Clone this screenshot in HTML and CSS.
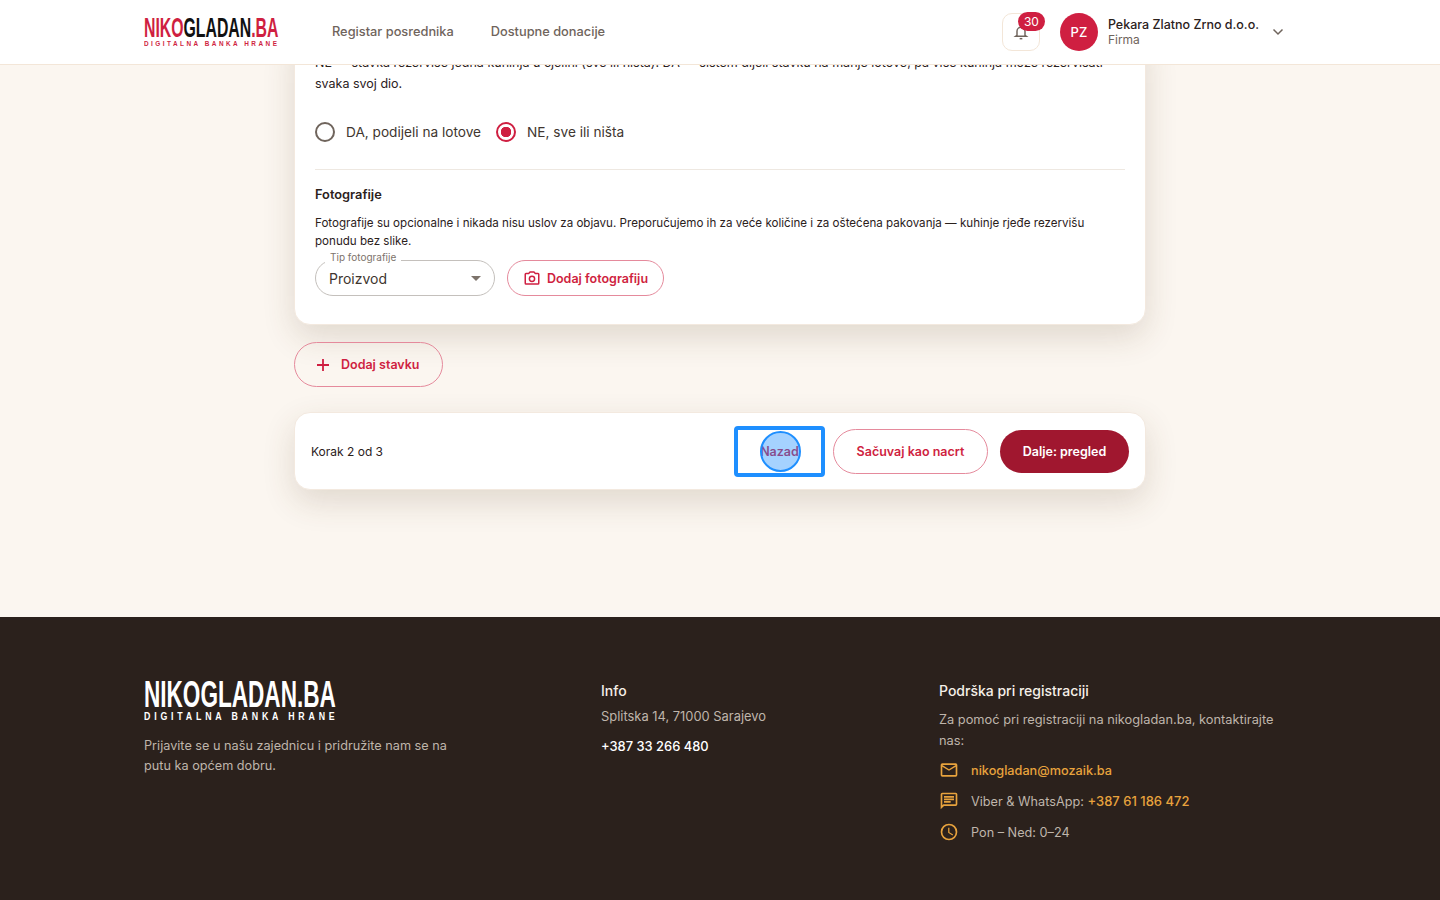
FILE: index.html
```html
<!DOCTYPE html>
<html>
    <head>
        <title>NikoGladan.ba</title>
        <link rel="stylesheet" href="styles.css">
    </head>
    <body>
        <header class="topbar">
            <a class="logo logo_small">
                <span class="logo_main"><b class="red">NIKO</b>GLADAN<b class="red">.BA</b></span>
                <span class="logo_tag">DIGITALNA BANKA HRANE</span>
            </a>
            <nav class="topnav">
                <a>Registar posrednika</a>
                <a>Dostupne donacije</a>
            </nav>
            <div class="topbar_right">
                <div class="bell">
                    <svg width="16" height="16" viewBox="0 0 24 24" fill="none" stroke="#6f645c" stroke-width="2.2"><path d="M6 17V11a6 6 0 0 1 12 0v6l2 1.5H4z"/><path d="M10 22h4"/></svg>
                    <span class="badge">30</span>
                </div>
                <div class="avatar">PZ</div>
                <div class="user">
                    <div class="user_name">Pekara Zlatno Zrno d.o.o.</div>
                    <div class="user_role">Firma</div>
                </div>
                <svg class="chevron" width="12" height="8" viewBox="0 0 12 8" fill="none" stroke="#6f645c" stroke-width="1.5"><path d="M1.5 1.5 6 6l4.5-4.5"/></svg>
            </div>
        </header>

        <main class="content">
            <section class="card card_form">
                <p class="hint">NE — stavka rezerviše jedna kuhinja u cjelini (sve ili ništa). DA — sistem dijeli stavku na manje lotove, pa više kuhinja može rezervisati svaka svoj dio.</p>
                <div class="radios">
                    <label class="radio"><span class="radio_dot"></span>DA, podijeli na lotove</label>
                    <label class="radio"><span class="radio_dot radio_on"></span>NE, sve ili ništa</label>
                </div>
                <hr class="divider">
                <h3 class="card_title">Fotografije</h3>
                <p class="photo_text">Fotografije su opcionalne i nikada nisu uslov za objavu. Preporučujemo ih za veće količine i za oštećena pakovanja — kuhinje rjeđe rezervišu ponudu bez slike.</p>
                <div class="photo_row">
                    <div class="select">
                        <span class="select_label">Tip fotografije</span>
                        <span>Proizvod</span>
                        <span class="select_arrow"></span>
                    </div>
                    <button class="btn btn_small">
                        <svg width="18" height="18" viewBox="0 0 24 24" fill="#cf1f41"><path d="M20 5h-3.2L15 3H9L7.2 5H4a2 2 0 0 0-2 2v12a2 2 0 0 0 2 2h16a2 2 0 0 0 2-2V7a2 2 0 0 0-2-2zm0 14H4V7h4l1.8-2h4.4L16 7h4zM12 8.5a4.5 4.5 0 1 0 0 9 4.5 4.5 0 0 0 0-9zm0 7a2.5 2.5 0 1 1 0-5 2.5 2.5 0 0 1 0 5z"/></svg>
                        Dodaj fotografiju
                    </button>
                </div>
            </section>

            <button class="btn btn_add">
                <svg width="18" height="18" viewBox="0 0 18 18" fill="none" stroke="#cf1f41" stroke-width="1.8"><path d="M9 3v12M3 9h12"/></svg>
                Dodaj stavku
            </button>

            <section class="card stepbar">
                <span class="step">Korak 2 od 3</span>
                <button class="btn_back">Nazad<span class="touch"></span></button>
                <button class="btn btn_draft">Sačuvaj kao nacrt</button>
                <button class="btn_next">Dalje: pregled</button>
            </section>
        </main>

        <footer class="footer">
            <div class="footer_col">
                <a class="logo logo_big">
                    <span class="logo_main">NIKOGLADAN.BA</span>
                    <span class="logo_tag">DIGITALNA BANKA HRANE</span>
                </a>
                <p class="footer_about">Prijavite se u našu zajednicu i pridružite nam se na putu ka općem dobru.</p>
            </div>
            <div class="footer_col">
                <h4>Info</h4>
                <p class="address">Splitska 14, 71000 Sarajevo</p>
                <p class="phone">+387 33 266 480</p>
            </div>
            <div class="footer_col">
                <h4>Podrška pri registraciji</h4>
                <p class="support">Za pomoć pri registraciji na nikogladan.ba, kontaktirajte nas:</p>
                <div class="contact contact_first">
                    <svg width="20" height="20" viewBox="0 0 24 24" fill="#e8a33d"><path d="M20 4H4a2 2 0 0 0-2 2v12a2 2 0 0 0 2 2h16a2 2 0 0 0 2-2V6a2 2 0 0 0-2-2zm0 14H4V8l8 5 8-5zm-8-7L4 6h16z"/></svg>
                    <a class="gold">nikogladan@mozaik.ba</a>
                </div>
                <div class="contact">
                    <svg width="20" height="20" viewBox="0 0 24 24" fill="#e8a33d"><path d="M20 2H4a2 2 0 0 0-2 2v18l4-4h14a2 2 0 0 0 2-2V4a2 2 0 0 0-2-2zm0 14H5.2L4 17.2V4h16zM6 12h8v2H6zm0-3h12v2H6zm0-3h12v2H6z"/></svg>
                    <span>Viber &amp; WhatsApp: <a class="gold gold_phone">+387 61 186 472</a></span>
                </div>
                <div class="contact">
                    <svg width="20" height="20" viewBox="0 0 24 24" fill="#e8a33d"><path d="M12 2a10 10 0 1 0 0 20 10 10 0 0 0 0-20zm0 18a8 8 0 1 1 0-16 8 8 0 0 1 0 16zm.5-13H11v6l5.2 3.2.8-1.3-4.5-2.7z"/></svg>
                    <span>Pon – Ned: 0–24</span>
                </div>
            </div>
        </footer>
    </body>
</html>
```

FILE: styles.css
```css
html, body {
    margin: 0;
    height: 900px;
    overflow: hidden;
}
body {
    display: flex;
    flex-direction: column;
    background: #fbf6f0;
    font-family: "Inter", "Noto Sans", sans-serif;
    color: #2b211c;
}
p, h3, h4 {
    margin: 0;
}
button {
    font-family: inherit;
    cursor: pointer;
}

/* header */
.topbar {
    position: fixed;
    top: 0;
    left: 0;
    right: 0;
    z-index: 10;
    box-sizing: border-box;
    height: 65px;
    padding: 0 144px;
    display: flex;
    align-items: center;
    background: #fff;
    border-bottom: 1px solid #f3e6d8;
}
.logo {
    display: flex;
    flex-direction: column;
    flex-shrink: 0;
    font-family: "Liberation Sans", sans-serif;
    font-weight: 700;
}
.logo_main, .logo_tag {
    display: block;
    transform-origin: left top;
    white-space: nowrap;
}
.logo_main b {
    font-weight: 700;
}
.logo_tag {
    transform: scaleX(0.8);
}
.logo_small {
    width: 134px;
    color: #111;
}
.logo_small .logo_main {
    font-size: 28px;
    line-height: 22px;
    transform: scaleX(0.565);
}
.logo_small .logo_tag {
    font-size: 8px;
    line-height: 9px;
    letter-spacing: 3.1px;
    color: #cf1f41;
}
.red {
    color: #cf1f41;
}
.topnav {
    display: flex;
    gap: 37px;
    margin-left: 54px;
    padding-bottom: 2px;
    font-size: 12.8px;
    font-weight: 500;
    color: #6f645c;
}
.topbar_right {
    margin-left: auto;
    padding-right: 11px;
    display: flex;
    align-items: center;
}
.bell {
    position: relative;
    width: 38px;
    height: 38px;
    box-sizing: border-box;
    display: flex;
    align-items: center;
    justify-content: center;
    border: 1px solid #f3e6d8;
    border-radius: 10px;
}
.badge {
    position: absolute;
    top: -2px;
    left: 15px;
    width: 27px;
    height: 19px;
    border-radius: 10px;
    background: #cf1f41;
    color: #fff;
    font-size: 12px;
    line-height: 19px;
    text-align: center;
}
.avatar {
    width: 38px;
    height: 38px;
    margin-left: 20px;
    border-radius: 50%;
    background: #cf1f41;
    color: #fff;
    font-size: 13px;
    font-weight: 500;
    line-height: 38px;
    text-align: center;
}
.user {
    margin-left: 10px;
}
.user_name {
    font-size: 12.5px;
    font-weight: 500;
    line-height: 16px;
}
.user_role {
    font-size: 12px;
    line-height: 14px;
    color: #6f645c;
}
.chevron {
    margin-left: 13px;
    margin-right: 1px;
}

/* content */
.content {
    flex: 1;
    display: flex;
    flex-direction: column;
    align-items: flex-start;
    width: 852px;
    margin: 0 auto;
    padding-top: 30px;
    box-sizing: border-box;
}
.card {
    width: 100%;
    box-sizing: border-box;
    background: #fff;
    border: 1px solid #f3e9df;
    border-radius: 16px;
    box-shadow: 0 12px 32px rgba(90, 60, 30, 0.16);
}
.card_form {
    height: 295px;
    padding: 21px 20px 0;
}
.hint {
    font-size: 12.5px;
    line-height: 21px;
}
.radios {
    display: flex;
    gap: 15px;
    margin-top: 17px;
}
.radio {
    display: flex;
    align-items: center;
    gap: 11px;
    height: 42px;
    font-size: 13.65px;
    color: #40362f;
}
.radio_dot {
    width: 20px;
    height: 20px;
    box-sizing: border-box;
    border: 2px solid #6f645c;
    border-radius: 50%;
}
.radio_on {
    border-color: #cf1f41;
    background: radial-gradient(circle, #cf1f41 0 5px, transparent 5.5px);
}
.divider {
    margin: 16px 0 0;
    border: 0;
    border-top: 1px solid #eee8e1;
}
.card_title {
    margin-top: 16px;
    font-size: 12.8px;
    font-weight: 600;
    line-height: 18px;
}
.photo_text {
    margin-top: 10px;
    font-size: 11.6px;
    line-height: 18px;
}
.photo_row {
    display: flex;
    gap: 12px;
    margin-top: 10px;
}
.select {
    position: relative;
    width: 180px;
    height: 36px;
    box-sizing: border-box;
    display: flex;
    align-items: center;
    padding: 0 13px;
    border: 1px solid #c4c0bc;
    border-radius: 18px;
    font-size: 14px;
    color: #40362f;
}
.select_label {
    position: absolute;
    top: -10px;
    left: 9px;
    padding: 0 5px;
    background: #fff;
    font-size: 10px;
    line-height: 13px;
    color: #7d736b;
}
.select_arrow {
    margin-left: auto;
    border-left: 5px solid transparent;
    border-right: 5px solid transparent;
    border-top: 5px solid #7d736b;
}
.btn {
    display: flex;
    align-items: center;
    justify-content: center;
    background: transparent;
    border: 1px solid #e58a9c;
    border-radius: 24px;
    color: #cf1f41;
    font-size: 12.5px;
    font-weight: 600;
}
.btn_small {
    width: 157px;
    height: 36px;
    gap: 6px;
}
.btn_add {
    width: 149px;
    height: 45px;
    gap: 9px;
    margin-top: 17px;
    justify-content: flex-start;
    padding-left: 19px;
}
.stepbar {
    height: 78px;
    margin-top: 25px;
    display: flex;
    align-items: center;
    padding: 0 16px;
}
.step {
    margin-right: auto;
    font-size: 12px;
}
.btn_back {
    position: relative;
    width: 91px;
    height: 51px;
    box-sizing: border-box;
    background: #fff;
    border: 4px solid #1e8fff;
    border-radius: 4px;
    color: #cf1f41;
    font-size: 12.5px;
    font-weight: 600;
}
.touch {
    position: absolute;
    top: 1px;
    left: 22px;
    width: 41px;
    height: 41px;
    box-sizing: border-box;
    background: rgba(30, 143, 255, 0.4);
    border: 2px solid #1e8fff;
    border-radius: 50%;
}
.btn_draft {
    width: 155px;
    height: 45px;
    margin-left: 8px;
    background: #fff;
}
.btn_next {
    width: 129px;
    height: 43px;
    margin-left: 12px;
    border: 0;
    border-radius: 22px;
    background: #a0172f;
    color: #fff;
    font-size: 12.5px;
    font-weight: 600;
}

/* footer */
.footer {
    height: 283px;
    box-sizing: border-box;
    display: grid;
    grid-template-columns: 457px 338px 1fr;
    padding: 63px 144px 0;
    background: #2b211c;
    color: #bfb5ab;
    font-size: 12.7px;
    line-height: 21px;
}
.logo_big {
    color: #fff;
    width: 193px;
}
.logo_big .logo_main {
    font-size: 37px;
    line-height: 30px;
    transform: scaleX(0.61);
}
.logo_big .logo_tag {
    font-size: 11px;
    line-height: 12px;
    letter-spacing: 4.76px;
}
.footer_about {
    width: 310px;
    margin-top: 14px;
    line-height: 20px;
}
.footer h4 {
    font-size: 14px;
    font-weight: 500;
    line-height: 22px;
    color: #f5efe8;
}
.address {
    margin-top: 4px;
    font-size: 12.9px;
}
.phone {
    margin-top: 9px;
    color: #fff;
    font-weight: 500;
    font-size: 12.9px;
}
.support {
    margin-top: 7px;
    font-size: 12.8px;
}
.contact {
    display: flex;
    align-items: center;
    gap: 12px;
    height: 30px;
    margin-top: 1px;
}
.contact_first {
    margin-top: 4px;
}
.gold {
    color: #e8a33d;
    font-weight: 500;
}
.gold_phone {
    font-size: 13px;
}
```
